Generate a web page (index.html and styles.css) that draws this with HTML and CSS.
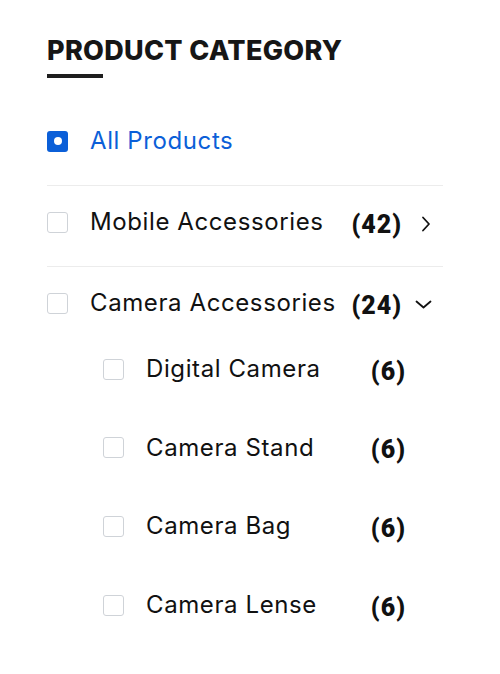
FILE: index.html
```html
<!DOCTYPE html>
<html lang="en">
<head>
<meta charset="utf-8">
<title>Product Category</title>
<link rel="stylesheet" href="styles.css">
</head>
<body>
<section class="widget">
  <h2 class="title">PRODUCT CATEGORY</h2>
  <div class="title-bar"></div>
  <ul class="cats">
    <li class="row active">
      <span class="box checked"><span class="dot"></span></span>
      <span class="label">All Products</span>
    </li>
    <li class="row">
      <span class="box"></span>
      <span class="label">Mobile Accessories</span>
      <span class="count">(42)</span>
      <span class="chev">
        <svg width="20" height="20" viewBox="0 0 20 20"><path d="M8 5.5 L14 12 L8 18.5" fill="none" stroke="#111" stroke-width="1.8" stroke-linecap="round" stroke-linejoin="round"/></svg>
      </span>
    </li>
    <li class="row open">
      <span class="box"></span>
      <span class="label">Camera Accessories</span>
      <span class="count">(24)</span>
      <span class="chev">
        <svg width="20" height="20" viewBox="0 0 20 20"><path d="M1.5 8.5 L8.5 14.5 L15.5 8.5" fill="none" stroke="#111" stroke-width="1.8" stroke-linecap="round" stroke-linejoin="round"/></svg>
      </span>
    </li>
  </ul>
  <ul class="subs">
    <li class="sub"><span class="box"></span><span class="label">Digital Camera</span><span class="count">(6)</span></li>
    <li class="sub"><span class="box"></span><span class="label">Camera Stand</span><span class="count">(6)</span></li>
    <li class="sub"><span class="box"></span><span class="label">Camera Bag</span><span class="count">(6)</span></li>
    <li class="sub"><span class="box"></span><span class="label">Camera Lense</span><span class="count">(6)</span></li>
  </ul>
</section>
</body>
</html>
```

FILE: styles.css
```css
html, body {
  margin: 0;
  padding: 0;
  background: #fff;
}
body {
  font-family: Inter, "Open Sans", sans-serif;
  color: #111;
}
.widget {
  width: 396px;
  padding: 33px 0 40px 47px;
}
.title {
  margin: 0;
  font-size: 27px;
  line-height: 36px;
  font-weight: 800;
  color: #161616;
  letter-spacing: 0.3px;
}
.title-bar {
  width: 56px;
  height: 4px;
  background: #1e1e1e;
  margin-top: 5px;
}
.cats, .subs {
  list-style: none;
  margin: 0;
  padding: 0;
}
.cats {
  margin-top: 27px;
}
.row {
  display: flex;
  align-items: center;
  height: 22px;
  padding: 25px 0 33px;
  border-bottom: 1px solid #ececec;
}
.row.open {
  border-bottom: none;
  padding-bottom: 0;
}
.box {
  flex: none;
  width: 19px;
  height: 19px;
  border: 1px solid #cfd3d8;
  border-radius: 3px;
  display: flex;
  align-items: center;
  justify-content: center;
}
.box.checked {
  width: 21px;
  height: 21px;
  border: none;
  background: #0b5fd8;
}
.dot {
  width: 8px;
  height: 8px;
  border-radius: 50%;
  background: #fff;
}
.label {
  margin-left: 22px;
  font-size: 24px;
  line-height: 22px;
  letter-spacing: 0.6px;
  flex: 1;
  white-space: nowrap;
}
.active .label {
  color: #0b5fd8;
}
.count {
  font-family: Roboto, "Liberation Sans", sans-serif;
  font-weight: 900;
  font-size: 25px;
  letter-spacing: 1px;
  line-height: 26px;
  margin-top: 5px;
}
.chev {
  flex: none;
  width: 20px;
  height: 20px;
  margin-left: 13px;
  margin-right: 8px;
  display: flex;
}
.subs {
  padding-left: 56px;
  margin-top: 44px;
  display: flex;
  flex-direction: column;
  gap: 56.7px;
}
.sub {
  display: flex;
  align-items: center;
  height: 22px;
  padding-right: 37px;
}
```
